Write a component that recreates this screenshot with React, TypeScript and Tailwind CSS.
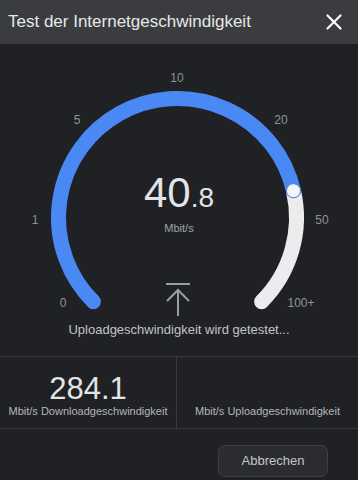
import { X } from 'lucide-react';

const CX = 177.5;
const CY = 173.5;
const R = 119;

// point on the gauge ring, angle in degrees (math orientation, 0 = right, 90 = up)
const pt = (deg: number, r: number = R) => {
  const a = (deg * Math.PI) / 180;
  return { x: CX + r * Math.cos(a), y: CY - r * Math.sin(a) };
};

const START = 225;
const END = -45;
const KNOB = 13;

const labels = [
  { t: '0', x: 63, y: 259 },
  { t: '1', x: 35, y: 176 },
  { t: '5', x: 77, y: 76 },
  { t: '10', x: 177, y: 34 },
  { t: '20', x: 281, y: 76 },
  { t: '50', x: 322, y: 176 },
  { t: '100+', x: 301, y: 259 },
];

const Gauge: React.FC = () => {
  const s = pt(START);
  const k = pt(KNOB);
  const e = pt(END);
  const blue = `M ${s.x} ${s.y} A ${R} ${R} 0 1 1 ${k.x} ${k.y}`;
  const rest = `M ${k.x} ${k.y} A ${R} ${R} 0 0 1 ${e.x} ${e.y}`;

  return (
    <svg className="absolute inset-0" width={358} height={276} viewBox="0 0 358 276">
      <path d={rest} fill="none" stroke="#ececee" strokeWidth={15} strokeLinecap="round" />
      <path d={blue} fill="none" stroke="#4a89f3" strokeWidth={15} strokeLinecap="round" />
      <circle cx={k.x} cy={k.y} r={7} fill="#f4f5f7" stroke="#4a89f3" strokeWidth={1} />
      {labels.map((l) => (
        <text
          key={l.t}
          x={l.x}
          y={l.y}
          textAnchor="middle"
          dominantBaseline="central"
          fontSize={12}
          fill="#8f9297"
          fontFamily="'Liberation Sans', Arial, sans-serif"
        >
          {l.t}
        </text>
      ))}
      {/* upload icon */}
      <g stroke="#9a9da2" strokeWidth={2} fill="none" strokeLinecap="square">
        <line x1={167} y1={240} x2={189} y2={240} />
        <line x1={178} y1={246} x2={178} y2={271} />
        <polyline points="167,257 178,246 189,257" strokeLinecap="butt" />
      </g>
    </svg>
  );
};

const App: React.FC = () => {
  return (
    <div className="w-[358px] h-[480px] bg-[#202124] flex flex-col overflow-hidden font-['Liberation_Sans',Arial,sans-serif]">
      <div className="h-[44px] shrink-0 bg-[#3b3c3f] flex items-center justify-between pl-[8px] pr-[11px]">
        <h1 className="text-[17px] text-[#e6e7e9]">Test der Internetgeschwindigkeit</h1>
        <X size={26} strokeWidth={2} className="text-white" />
      </div>

      <div className="h-[313px] shrink-0 flex flex-col border-b border-[#3a3b3f]">
        <div className="relative h-[276px]">
          <Gauge />
          <div className="absolute left-0 right-0 top-[128px] flex items-baseline justify-center text-[#e3e4e6]">
            <span className="text-[42px] leading-none">40</span>
            <span className="text-[28px] leading-none">.8</span>
          </div>
          <p className="absolute left-0 right-0 top-[177px] text-center text-[11px] leading-[14px] text-[#a0a3a8]">
            Mbit/s
          </p>
        </div>
        <p className="text-center text-[13px] leading-[20px] text-[#c2c4c7]">
          Uploadgeschwindigkeit wird getestet...
        </p>
      </div>

      <div className="h-[72px] shrink-0 grid grid-cols-[177px_1fr] border-b border-[#3a3b3f]">
        <div className="flex flex-col items-center pt-[16px] border-r border-[#3a3b3f]">
          <span className="text-[31px] leading-none text-[#e3e4e6]">284.1</span>
          <span className="text-[11px] leading-[14px] text-[#b4b6ba]">Mbit/s Downloadgeschwindigkeit</span>
        </div>
        <div className="flex flex-col items-center pt-[16px]">
          <span className="h-[31px]"></span>
          <span className="text-[11px] leading-[14px] text-[#b4b6ba]">Mbit/s Uploadgeschwindigkeit</span>
        </div>
      </div>

      <div className="flex justify-end pt-[16px] pr-[30px]">
        <button className="w-[110px] h-[32px] rounded-[7px] bg-[#2b2c30] border border-[#3f4044] text-[13px] text-[#c5c7ca]">
          Abbrechen
        </button>
      </div>
    </div>
  );
};

export default App;
